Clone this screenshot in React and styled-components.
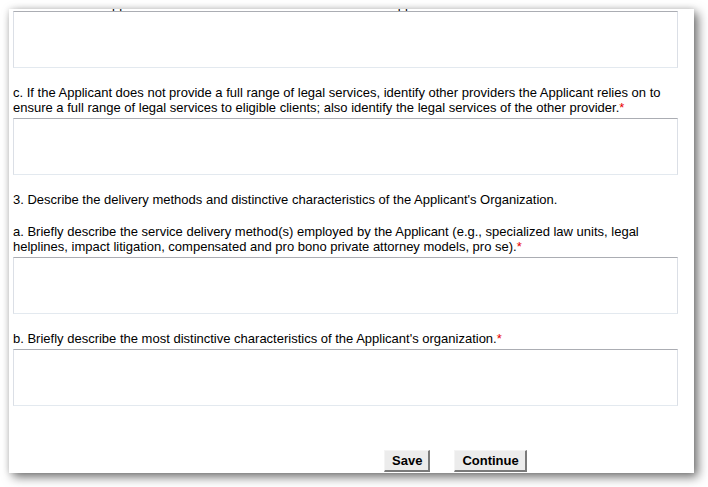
import styled, { createGlobalStyle } from "styled-components";

const GlobalStyle = createGlobalStyle`
  html, body {
    margin: 0;
    padding: 0;
    background: #fff;
  }
  body {
    font-family: Arial, "Liberation Sans", sans-serif;
    overflow: hidden;
  }
`;

const Page = styled.div`
  width: 708px;
  height: 487px;
  padding: 9px 0 0 9px;
  box-sizing: border-box;
`;

const Panel = styled.div`
  width: 685px;
  height: 464px;
  background: #fff;
  overflow: hidden;
  box-shadow: 4px 4px 10px rgba(0, 0, 0, 0.55), 0 0 6px rgba(0, 0, 0, 0.12);
`;

const Form = styled.form`
  padding-left: 4px;
  font-size: 13px;
  line-height: 15px;
  color: #000;
`;

const Label = styled.div`
  margin: ${(p) => (p.$clipped ? "-13px 0 0" : "17px 0 3px")};
  width: 665px;
  white-space: ${(p) => (p.$clipped ? "nowrap" : "normal")};
`;

const Heading = styled.div`
  margin: 17px 0 0;
`;

const Required = styled.span`
  color: #e80000;
`;

const Field = styled.textarea`
  display: block;
  box-sizing: border-box;
  width: 665px;
  height: 57px;
  margin: 0;
  resize: none;
  background: #fff;
  border: 1px solid #dbdfe6;
  border-top-color: #abadb3;
  border-bottom-color: #e3e9ef;
  outline: none;
`;

const Buttons = styled.div`
  display: flex;
  gap: 24px;
  margin: 44px 0 0 371px;
`;

const Button = styled.button`
  height: 22px;
  padding: 0 6px 0 7px;
  margin: 0;
  background: #ececec;
  border-style: solid;
  border-width: 1px 2px 2px 1px;
  border-color: #f4f4f4 #7a7a7a #7a7a7a #f4f4f4;
  border-radius: 0;
  font-family: Arial, "Liberation Sans", sans-serif;
  font-size: 13px;
  font-weight: bold;
  line-height: 19px;
  color: #000;
`;

export default function App() {
  return (
    <>
      <GlobalStyle />
      <Page>
        <Panel>
          <Form>
            <Label $clipped>
              b. Describe the Applicant's structure and resources that allow the Applicant to serve clients.
            </Label>
            <Field />
            <Label>
              c. If the Applicant does not provide a full range of legal services, identify other providers the Applicant relies on to
              ensure a full range of legal services to eligible clients; also identify the legal services of the other provider.
              <Required>*</Required>
            </Label>
            <Field />
            <Heading>3. Describe the delivery methods and distinctive characteristics of the Applicant's Organization.</Heading>
            <Label>
              a. Briefly describe the service delivery method(s) employed by the Applicant (e.g., specialized law units, legal
              helplines, impact litigation, compensated and pro bono private attorney models, pro se).
              <Required>*</Required>
            </Label>
            <Field />
            <Label>
              b. Briefly describe the most distinctive characteristics of the Applicant's organization.
              <Required>*</Required>
            </Label>
            <Field />
            <Buttons>
              <Button type="button">Save</Button>
              <Button type="button">Continue</Button>
            </Buttons>
          </Form>
        </Panel>
      </Page>
    </>
  );
}
